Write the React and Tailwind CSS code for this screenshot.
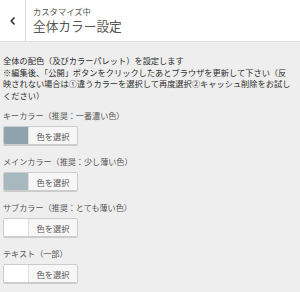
const font = { fontFamily: '"Noto Sans CJK JP", "Noto Sans", sans-serif' }

const controls = [
  { label: 'キーカラー（推奨：一番濃い色）', color: 'bg-[#8fa2ad]' },
  { label: 'メインカラー（推奨：少し薄い色）', color: 'bg-[#a8b8c0]' },
  { label: 'サブカラー（推奨：とても薄い色）', color: 'bg-white' },
  { label: 'テキスト（一部）', color: 'bg-white' },
]

function ColorButton({ color }) {
  return (
    <div className="flex h-[19px] w-[75px] rounded-[2px] border border-[#cccccc] shadow-[0_1px_0_#ccc] overflow-hidden">
      <div className={`w-[25px] h-full ${color} border-r border-[#dddddd]`} />
      <div className="flex-1 bg-[#f7f7f7] flex items-center justify-center text-[8.2px] text-[#555]">色を選択</div>
    </div>
  )
}

export default function App() {
  return (
    <div className="w-[300px] h-[292px] bg-[#eeeeee] overflow-hidden" style={font}>
      <div className="flex h-[42px] bg-white border-b border-[#dddddd]">
        <div className="w-[26px] border-r border-[#dddddd] flex items-center justify-center">
          <svg width="8" height="10" viewBox="0 0 8 10">
            <path d="M5.5 1.5 L2.2 5 L5.5 8.5" fill="none" stroke="#333" strokeWidth="1.6" />
          </svg>
        </div>
        <div className="pl-[7px] pt-[6px]">
          <div className="text-[8.3px] leading-[10px] text-[#555]">カスタマイズ中</div>
          <div className="text-[12.7px] leading-[18px] text-[#555] mt-[1px]">全体カラー設定</div>
        </div>
      </div>
      <div className="pl-[3px] pr-[3px] pt-[13px]">
        <div className="text-[8.22px] leading-[11.6px] text-[#2c2c2c] whitespace-nowrap">
          全体の配色（及びカラーパレット）を設定します<br />
          ※編集後、「公開」ボタンをクリックしたあとブラウザを更新して下さい（反<br />
          映されない場合は①違うカラーを選択して再度選択②キャッシュ削除をお試し<br />
          ください）
        </div>
        <div className="mt-[9px]">
          {controls.map(c => (
            <div key={c.label} className="mb-[11px]">
              <div className="text-[8.1px] leading-[12px] text-[#555]">{c.label}</div>
              <div className="mt-[4px]">
                <ColorButton color={c.color} />
              </div>
            </div>
          ))}
        </div>
      </div>
    </div>
  )
}
